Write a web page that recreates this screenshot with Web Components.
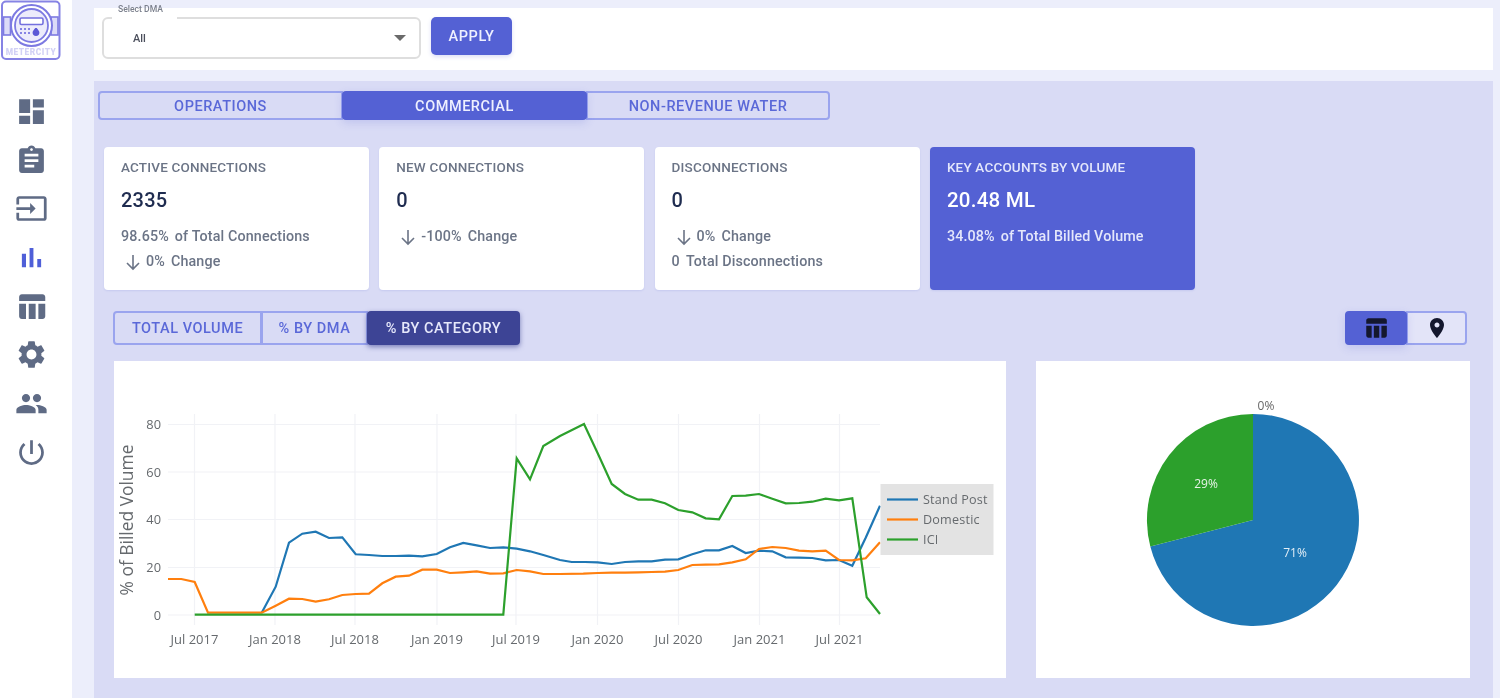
<!DOCTYPE html>
<html lang="en">
<head>
<meta charset="utf-8">
<title>MeterCity Commercial</title>
<style>
  html,body{margin:0;padding:0;height:698px;overflow:hidden;background:#eceefb;font-family:Roboto,"Liberation Sans",sans-serif}
</style>
</head>
<body>
<app-shell>
  <side-nav slot="nav"></side-nav>
  <filter-bar></filter-bar>
  <main-panel>
    <seg-group slot="tabs" kind="tabs">
      <seg-btn style="width:245px">OPERATIONS</seg-btn>
      <seg-btn style="width:245px" active>COMMERCIAL</seg-btn>
      <seg-btn style="width:244px">NON-REVENUE WATER</seg-btn>
    </seg-group>
    <stat-row slot="stats">
      <stat-card>
        <span slot="title">ACTIVE CONNECTIONS</span><span slot="value">2335</span>
        <stat-line>98.65%<b></b>of Total Connections</stat-line>
        <stat-line arrow>0%<b></b>Change</stat-line>
      </stat-card>
      <stat-card>
        <span slot="title">NEW CONNECTIONS</span><span slot="value">0</span>
        <stat-line arrow>-100%<b></b>Change</stat-line>
      </stat-card>
      <stat-card>
        <span slot="title">DISCONNECTIONS</span><span slot="value">0</span>
        <stat-line arrow>0%<b></b>Change</stat-line>
        <stat-line>0<b></b>Total Disconnections</stat-line>
      </stat-card>
      <stat-card highlight>
        <span slot="title">KEY ACCOUNTS BY VOLUME</span><span slot="value">20.48 ML</span>
        <stat-line>34.08%<b></b>of Total Billed Volume</stat-line>
      </stat-card>
    </stat-row>
    <seg-group slot="left-toggle" kind="dark">
      <seg-btn style="width:149px">TOTAL VOLUME</seg-btn>
      <seg-btn style="width:107px">% BY DMA</seg-btn>
      <seg-btn style="width:153px" active>% BY CATEGORY</seg-btn>
    </seg-group>
    <seg-group slot="right-toggle" kind="icons">
      <seg-btn style="width:62px" active><svg width="26" height="26" viewBox="0 0 24 24" fill="#14172e"><path d="M10 10.02h5V21h-5zM17 21h3c1.1 0 2-.9 2-2v-9h-5v11zm3-18H5c-1.1 0-2 .9-2 2v3h19V5c0-1.1-.9-2-2-2zM3 19c0 1.1.9 2 2 2h3V10H3v9z"/></svg></seg-btn>
      <seg-btn style="width:61px;background:#e3e4f8"><svg width="24" height="24" viewBox="0 0 24 24" fill="#14172e"><path d="M12 2C8.13 2 5 5.13 5 9c0 5.25 7 13 7 13s7-7.75 7-13c0-3.87-3.13-7-7-7zm0 9.5c-1.38 0-2.5-1.12-2.5-2.5s1.12-2.5 2.5-2.5 2.5 1.12 2.5 2.5-1.12 2.5-2.5 2.5z"/></svg></seg-btn>
    </seg-group>
    <line-chart slot="line"></line-chart>
    <pie-chart slot="pie"></pie-chart>
  </main-panel>
</app-shell>

<script>
function def(name, css, html){
  customElements.define(name, class extends HTMLElement{
    constructor(){
      super();
      const r=this.attachShadow({mode:'open'});
      r.innerHTML='<style>'+css+'</style>'+(typeof html==='function'?html():html);
    }
  });
}

def('app-shell',`
  :host{display:grid;grid-template-columns:72px 1fr;height:698px;overflow:hidden;background:#eceefb;filter:blur(.5px)}
  .nav{background:#fff;min-width:0}
  .content{padding:8px 7px 0 22px;min-width:0;display:flex;flex-direction:column;gap:11px}
`,`<div class="nav"><slot name="nav"></slot></div><div class="content"><slot></slot></div>`);

const navIcons=[
 ['M3 13h8V3H3v10zm0 8h8v-6H3v6zm10 0h8V11h-8v10zm0-18v6h8V3h-8z'],
 ['M19 3h-4.18C14.4 1.84 13.3 1 12 1c-1.3 0-2.4.84-2.82 2H5c-1.1 0-2 .9-2 2v14c0 1.1.9 2 2 2h14c1.1 0 2-.9 2-2V5c0-1.1-.9-2-2-2zm-7 0c.55 0 1 .45 1 1s-.45 1-1 1-1-.45-1-1 .45-1 1-1zm2 14H7v-2h7v2zm3-4H7v-2h10v2zm0-4H7V7h10v2z'],
 ['M21 3.01H3c-1.1 0-2 .9-2 2V9h2V4.99h18v14.03H3V15H1v4.01c0 1.1.9 1.98 2 1.98h18c1.1 0 2-.88 2-1.98v-14c0-1.11-.9-2-2-2zM11 16l4-4-4-4v3H1v2h10v3z'],
 ['M5 9.2h3V19H5zM10.6 5h2.8v14h-2.8zm5.6 8H19v6h-2.8z',1],
 ['M10 10.02h5V21h-5zM17 21h3c1.1 0 2-.9 2-2v-9h-5v11zm3-18H5c-1.1 0-2 .9-2 2v3h19V5c0-1.1-.9-2-2-2zM3 19c0 1.1.9 2 2 2h3V10H3v9z'],
 ['M19.14 12.94c.04-.3.06-.61.06-.94 0-.32-.02-.64-.07-.94l2.03-1.58c.18-.14.23-.41.12-.61l-1.92-3.32c-.12-.22-.37-.29-.59-.22l-2.39.96c-.5-.38-1.03-.7-1.62-.94l-.36-2.54c-.04-.24-.24-.41-.48-.41h-3.84c-.24 0-.43.17-.47.41l-.36 2.54c-.59.24-1.13.57-1.62.94l-2.39-.96c-.22-.08-.47 0-.59.22L2.74 8.87c-.12.21-.08.47.12.61l2.03 1.58c-.05.3-.09.63-.09.94s.02.64.07.94l-2.03 1.58c-.18.14-.23.41-.12.61l1.92 3.32c.12.22.37.29.59.22l2.39-.96c.5.38 1.03.7 1.62.94l.36 2.54c.05.24.24.41.48.41h3.84c.24 0 .44-.17.47-.41l.36-2.54c.59-.24 1.13-.56 1.62-.94l2.39.96c.22.08.47 0 .59-.22l1.92-3.32c.12-.22.07-.47-.12-.61l-2.01-1.58zM12 15.6c-1.98 0-3.6-1.62-3.6-3.6s1.62-3.6 3.6-3.6 3.6 1.62 3.6 3.6-1.62 3.6-3.6 3.6z'],
 ['M16 11c1.66 0 2.99-1.34 2.99-3S17.66 5 16 5c-1.66 0-3 1.34-3 3s1.34 3 3 3zm-8 0c1.66 0 2.99-1.34 2.99-3S9.66 5 8 5C6.34 5 5 6.34 5 8s1.34 3 3 3zm0 2c-2.33 0-7 1.17-7 3.5V19h14v-2.5c0-2.33-4.67-3.5-7-3.5zm8 0c-.29 0-.62.02-.97.05 1.16.84 1.97 1.97 1.97 3.45V19h6v-2.5c0-2.33-4.67-3.5-7-3.5z'],
 ['M13 3h-2v10h2V3zm4.83 2.17l-1.42 1.42C17.99 7.86 19 9.81 19 12c0 3.87-3.13 7-7 7s-7-3.13-7-7c0-2.19 1.01-4.14 2.58-5.42L6.17 5.17C4.23 6.82 3 9.26 3 12c0 4.97 4.03 9 9 9s9-4.03 9-9c0-2.74-1.23-5.18-3.17-6.83z']
];
def('side-nav',`
  :host{display:flex;flex-direction:column;align-items:center;padding:0 11px 0 0;box-sizing:border-box;width:72px}
  .logo{display:block;margin:0;flex:none;align-self:flex-start}
  .icons{display:flex;flex-direction:column;gap:15.7px;margin-top:34px;margin-left:1px}
  svg.i{display:block;width:33px;height:33px;fill:#5f6b85}
  svg.on{fill:#4f5fd8}
`,()=>`
  <svg class="logo" width="62" height="61" viewBox="0 0 62 61">
    <rect x="2" y="1.5" width="57.5" height="57.5" rx="4" fill="#fff" stroke="#8683e4" stroke-width="2"/>
    <rect x="3.5" y="17" width="7" height="18" fill="#dcdbf8" stroke="#7d7ae2" stroke-width="1.6"/>
    <rect x="51" y="17" width="7" height="18" fill="#dcdbf8" stroke="#7d7ae2" stroke-width="1.6"/>
    <circle cx="31.5" cy="25.5" r="20.5" fill="#fff" stroke="#7d7ae2" stroke-width="2"/>
    <circle cx="31.5" cy="25.5" r="16.5" fill="#ecebfb" stroke="#7d7ae2" stroke-width="1.8"/>
    <rect x="20" y="18" width="23" height="6.5" rx="1.5" fill="#fff" stroke="#7470de" stroke-width="1.6"/>
    <path d="M20 29h2M24 29h2M28 29h2M20 33h2M24 33h2M28 33h2" stroke="#8683e4" stroke-width="1.8"/>
    <path d="M36 27c-2.4 3-3.4 4.2-3.4 5.6a3.4 3.4 0 0 0 6.8 0c0-1.4-1-2.6-3.4-5.6z" fill="#5c58d6"/>
    <text x="31" y="54.5" text-anchor="middle" font-family="Roboto,sans-serif" font-size="8.4" font-weight="900" fill="#d2d1f5" letter-spacing=".5">METERCITY</text>
  </svg>
  <div class="icons">${navIcons.map(a=>`<svg class="i${a[1]?' on':''}" viewBox="0 0 24 24"><path d="${a[0]}"/></svg>`).join('')}</div>
`);

def('filter-bar',`
  :host{display:flex;align-items:flex-start;gap:10px;height:62px;box-sizing:border-box;background:#fff;padding:9px 0 0 8px;flex:none}
  .sel{position:relative;width:319px;height:42px;box-sizing:border-box;border:2px solid #dedede;border-radius:6px;display:flex;align-items:center;justify-content:space-between;padding:0 13px 0 29px;font-size:11px;font-weight:500;color:#4b4f5c}
  .lab{position:absolute;left:8px;top:-15px;padding:0 14px 0 6px;background:linear-gradient(transparent 4px,#fff 4px);font-size:8.6px;color:#7a7f8c;line-height:11px;height:19px}
  .car{width:0;height:0;border:6px solid transparent;border-top:6px solid #6a6a6a;border-bottom:0}
  .btn{width:81px;height:38px;background:#5461d4;color:#eef0ff;border-radius:5px;display:flex;align-items:center;justify-content:center;font-size:14.5px;font-weight:500;letter-spacing:.55px;box-shadow:0 2px 4px #5461d433}
`,`<div class="sel"><span class="lab">Select DMA</span><span>All</span><span class="car"></span></div><div class="btn">APPLY</div>`);

def('main-panel',`
  :host{display:block;background:#d9dbf5;flex:1;min-height:0;box-sizing:border-box;padding:10px 26px 0 4px}
  .stats{margin:27px 0 0 6px}
  .bar{display:flex;justify-content:space-between;margin:21px 0 0 15px}
  .charts{display:flex;justify-content:space-between;margin:16px -3px 0 16px}
`,`
  <slot name="tabs"></slot>
  <div class="stats"><slot name="stats"></slot></div>
  <div class="bar"><slot name="left-toggle"></slot><slot name="right-toggle"></slot></div>
  <div class="charts"><slot name="line"></slot><slot name="pie"></slot></div>
`);

def('seg-group',`
  :host{display:inline-flex;height:29px}
  :host([kind=dark]),:host([kind=icons]){height:34px}
  :host([kind=tabs]) ::slotted(seg-btn){padding-top:1px}
  ::slotted(seg-btn){--active:#5461d4;--active-fg:#eef0ff}
  :host([kind=dark]) ::slotted(seg-btn){--active:#3d4495;--active-fg:#e6e8fb;--shadow:0 2px 5px #3d449599}
`,`<slot></slot>`);

def('seg-btn',`
  :host{display:flex;align-items:center;justify-content:center;box-sizing:border-box;border:2px solid #9aa4ee;margin-right:-1px;color:#5a68d8;font-size:14.5px;font-weight:500;letter-spacing:.55px;background:transparent}
  :host(:first-child){border-radius:4px 0 0 4px}
  :host(:last-child){border-radius:0 4px 4px 0;margin-right:0}
  :host([active]){background:var(--active);border-color:var(--active);color:var(--active-fg);box-shadow:var(--shadow,0 3px 8px #5461d42e);position:relative;z-index:1;border-radius:4px}
  ::slotted(svg){display:block}
`,`<slot></slot>`);

def('stat-row',`
  :host{display:grid;grid-template-columns:repeat(4,265px);column-gap:10.3px}
`,`<slot></slot>`);

def('stat-card',`
  :host{display:flex;flex-direction:column;height:143px;box-sizing:border-box;background:#fff;border-radius:4px;padding:12px 10px 0 17px;color:#6b7486;box-shadow:0 1px 2px #5461d422}
  :host([highlight]){background:#5461d4;color:#e4e7fb}
  .t{font-size:13.5px;line-height:16px;font-weight:500;letter-spacing:.18px;color:#6b7486}
  :host([highlight]) .t{color:#e4e7fb}
  .v{font-size:20px;line-height:26px;font-weight:500;margin:12px 0 13px;color:#1f2c50;letter-spacing:.2px}
  :host([highlight]) .v{color:#fff;font-size:20.5px;letter-spacing:.25px}
  .l{display:flex;flex-direction:column;gap:5px}
`,`<div class="t"><slot name="title"></slot></div><div class="v"><slot name="value"></slot></div><div class="l"><slot></slot></div>`);

def('stat-line',`
  :host{display:flex;align-items:center;height:20px;font-size:14.3px;font-weight:500;letter-spacing:.14px;white-space:nowrap}
  svg{display:none;width:18px;height:18px;margin:1px 4px 0 3px;fill:none;stroke:currentColor;stroke-width:1.6}
  :host([arrow]) svg{display:block}
  ::slotted(b){display:inline-block;width:6px}
`,`<svg viewBox="0 0 18 18"><path d="M9 2v14M3 10l6 6 6-6"/></svg><slot></slot>`);

const Z7=[110,400], Z8=[560,400];
function toPts(o,a){const r=[];for(let i=0;i<a.length;i+=2)r.push((o[0]+a[i]/3).toFixed(1)+','+(o[1]+a[i+1]/3).toFixed(1));return r;}
const orange=toPts(Z7,[174,537,214,537,254,546,294,638,335,638,375,638,415,638,455,638,497,617,537,596,577,597,617,605,657,598,697,585,737,582,777,581,817,550,857,530,897,527,937,509,980,509,1020,519,1060,517,1100,514,1140,521,1180,520,1220,510,1260,514,1300,522,1350,522]).concat(toPts(Z8,[70,521,113,519,155,518,195,518,235,517,275,516,315,515,355,510,397,495,437,494,477,493,517,487,557,478,597,447,637,441,677,444,717,452,757,454,797,452,837,480,877,481,917,475,960,427]));
const blue=toPts(Z7,[455,638,497,560,537,428,577,401,617,395,657,414,697,412,737,463,777,465,817,468,857,468,897,467,937,469,980,462,1020,442,1060,429,1100,436,1140,444,1180,442,1220,446,1260,454,1300,465,1350,480]).concat(toPts(Z8,[35,486,75,486,113,487,155,492,195,486,235,484,275,484,315,479,355,478,397,463,437,451,477,451,517,438,557,459,597,452,637,454,677,472,717,473,757,474,797,481,837,480,877,497,917,413,960,317]));
const green=toPts(Z7,[254,644,1180,644,1220,175,1260,238,1300,138,1350,108]).concat(toPts(Z8,[72,72,113,160,155,252,195,282,235,299,275,299,315,310,355,330,397,337,437,355,477,358,517,288,557,287,597,282,637,296,677,310,717,309,757,305,797,296,837,301,877,295,920,592,960,642]));
const CX=114, CY=361;
const shift=p=>p.map(s=>{const [x,y]=s.split(',');return (x-CX).toFixed(1)+','+(y-CY).toFixed(1)}).join(' ');
const ticks=[[194.5,'Jul 2017'],[275,'Jan 2018'],[355,'Jul 2018'],[437,'Jan 2019'],[516,'Jul 2019'],[597.5,'Jan 2020'],[678.5,'Jul 2020'],[759.5,'Jan 2021'],[839.5,'Jul 2021']];
const yt=[[615,'0'],[567.5,'20'],[519.5,'40'],[472,'60'],[424.5,'80']];
def('line-chart',`
  :host{display:block;width:892px;height:317px;background:#fff;flex:none}
  svg{display:block;font-family:"Open Sans","Liberation Sans",sans-serif}
  text{fill:#666a6e}
`,()=>`
  <svg width="892" height="317" viewBox="0 0 892 317">
    ${yt.map(t=>`<line x1="54" x2="766" y1="${t[0]-CY}" y2="${t[0]-CY}" stroke="#f1f2f6" stroke-width="1.2"/>`).join('')}
    ${ticks.map(t=>`<line y1="53" y2="264" x1="${t[0]-CX}" x2="${t[0]-CX}" stroke="#f1f2f6" stroke-width="1.2"/>`).join('')}
    ${yt.map(t=>`<text x="47" y="${t[0]-CY+4.5}" text-anchor="end" font-size="12.8">${t[1]}</text>`).join('')}
    ${ticks.map(t=>`<text x="${t[0]-CX}" y="283" text-anchor="middle" font-size="13">${t[1]}</text>`).join('')}
    <text transform="translate(19 159) rotate(-90)" text-anchor="middle" font-size="17.4">% of Billed Volume</text>
    <polyline points="${shift(blue)}" fill="none" stroke="#1f77b4" stroke-width="2.2"/>
    <polyline points="${shift(orange)}" fill="none" stroke="#ff7f0e" stroke-width="2.2"/>
    <polyline points="${shift(green)}" fill="none" stroke="#2ca02c" stroke-width="2.2"/>
    <rect x="766.5" y="123" width="113" height="71" fill="#e3e3e3"/>
    <line x1="773" x2="804" y1="138.5" y2="138.5" stroke="#1f77b4" stroke-width="2.2"/>
    <line x1="773" x2="804" y1="158.5" y2="158.5" stroke="#ff7f0e" stroke-width="2.2"/>
    <line x1="773" x2="804" y1="178.5" y2="178.5" stroke="#2ca02c" stroke-width="2.2"/>
    <text x="809" y="143" font-size="12.6" letter-spacing=".2">Stand Post</text>
    <text x="809" y="163" font-size="12.6" letter-spacing=".2">Domestic</text>
    <text x="809" y="183" font-size="12.6" letter-spacing=".2">ICI</text>
  </svg>
`);

def('pie-chart',`
  :host{display:block;width:434px;height:317px;background:#fff;flex:none}
  svg{display:block;font-family:"Open Sans","Liberation Sans",sans-serif}
`,()=>{
  const cx=217,cy=159,r=106;
  const a=0.71*2*Math.PI, ex=cx+r*Math.sin(a), ey=cy-r*Math.cos(a);
  return `<svg width="434" height="317" viewBox="0 0 434 317">
    <path d="M${cx} ${cy}L${cx} ${cy-r}A${r} ${r} 0 1 1 ${ex.toFixed(1)} ${ey.toFixed(1)}Z" fill="#1f77b4"/>
    <path d="M${cx} ${cy}L${ex.toFixed(1)} ${ey.toFixed(1)}A${r} ${r} 0 0 1 ${cx} ${cy-r}Z" fill="#2ca02c"/>
    <text x="230" y="49" text-anchor="middle" font-size="12" fill="#666">0%</text>
    <text x="170" y="127" text-anchor="middle" font-size="12" fill="#e8f3e8">29%</text>
    <text x="259" y="196" text-anchor="middle" font-size="12" fill="#e3eef6">71%</text>
  </svg>`;
});
</script>
</body>
</html>
